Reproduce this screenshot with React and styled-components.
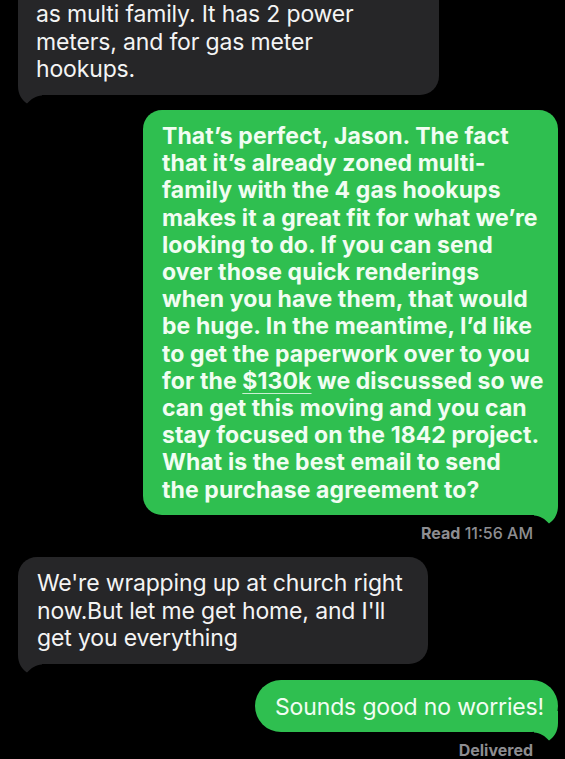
import React from 'react'
import styled, { createGlobalStyle } from 'styled-components'

const GlobalStyle = createGlobalStyle`
    html, body {
        margin: 0;
        padding: 0;
        background: #000;
    }
    body {
        font-family: "Inter", "Liberation Sans", sans-serif;
        overflow: hidden;
    }
`

const thread = [
    {
        from: 'them',
        width: 421,
        cut: true,
        lines: [
            'as multi family. It has 2 power',
            'meters, and for gas meter',
            'hookups.',
        ],
    },
    {
        from: 'me',
        width: 415,
        bold: true,
        lines: [
            'That\u2019s perfect, Jason. The fact',
            'that it\u2019s already zoned multi-',
            'family with the 4 gas hookups',
            'makes it a great fit for what we\u2019re',
            'looking to do. If you can send',
            'over those quick renderings',
            'when you have them, that would',
            'be huge. In the meantime, I\u2019d like',
            'to get the paperwork over to you',
            ['for the ', { link: '$130k' }, ' we discussed so we'],
            'can get this moving and you can',
            'stay focused on the 1842 project.',
            'What is the best email to send',
            'the purchase agreement to?',
        ],
        status: { label: 'Read', time: '11:56 AM' },
    },
    {
        from: 'them',
        width: 410,
        lines: [
            "We're wrapping up at church right",
            "now.But let me get home, and I'll",
            'get you everything',
        ],
    },
    {
        from: 'me',
        width: 303,
        pill: true,
        lines: ['Sounds good no worries!'],
        status: { label: 'Delivered' },
    },
]

const Line = ({ line }) => {
    if (typeof line === 'string') return <TextLine>{line}</TextLine>
    return (
        <TextLine>
            {line.map((part, i) =>
                typeof part === 'string' ? part : <Money key={i}>{part.link}</Money>
            )}
        </TextLine>
    )
}

// bubble tail, drawn for the sent side and mirrored for received
const Tail = ({ side }) => (
    <TailSvg $side={side} width="24" height="30" viewBox="0 0 24 30">
        <path d="M24 0 V12 C24 21 19.5 26.5 15 29.5 C11 25 6 22 0 21.5 V0 Z" />
    </TailSvg>
)

export default function App() {
    return (
        <>
            <GlobalStyle />
            <Thread>
                {thread.map((msg, i) => (
                    <Message key={i} $from={msg.from}>
                        <Bubble
                            $from={msg.from}
                            $width={msg.width}
                            $bold={msg.bold}
                            $cut={msg.cut}
                            $pill={msg.pill}
                        >
                            {msg.lines.map((line, j) => (
                                <Line key={j} line={line} />
                            ))}
                            <Tail side={msg.from} />
                        </Bubble>
                        {msg.status && (
                            <Status>
                                <b>{msg.status.label}</b>
                                {msg.status.time && <span> {msg.status.time}</span>}
                            </Status>
                        )}
                    </Message>
                ))}
            </Thread>
        </>
    )
}

const Thread = styled.main`
    display: flex;
    flex-direction: column;
    padding: 0 7px 0 18px;
    height: 759px;
`

const Message = styled.section`
    display: flex;
    flex-direction: column;
    align-items: ${(p) => (p.$from === 'me' ? 'flex-end' : 'flex-start')};

    & + & {
        margin-top: ${(p) => (p.$from === 'me' ? '15px' : '9px')};
    }
    &:last-child {
        margin-top: 16px;
    }
`

const Bubble = styled.div`
    position: relative;
    box-sizing: border-box;
    width: ${(p) => p.$width}px;
    margin-top: ${(p) => (p.$cut ? '-20px' : '0')};
    padding: ${(p) => (p.$cut ? '21px 18px 11.5px' : p.$pill ? '13.5px 18px 11px 20px' : '13px 18px 11.5px 19px')};
    border-radius: ${(p) => (p.$pill ? '26px' : '19px')};
    background: ${(p) => (p.$from === 'me' ? '#2fbf50' : '#262628')};
    color: ${(p) => (p.$from === 'me' ? '#f1fdf2' : '#f4f4f4')};
    fill: ${(p) => (p.$from === 'me' ? '#2fbf50' : '#262628')};
    font-size: 23px;
    font-weight: ${(p) => (p.$bold ? 700 : 400)};
    line-height: ${(p) => (p.$bold ? '27.2px' : '27.5px')};
    letter-spacing: ${(p) => (p.$bold ? '0.1px' : '-0.15px')};
`

const TextLine = styled.span`
    display: block;
    width: fit-content;
    white-space: nowrap;
    position: relative;
    z-index: 1;
`

const Money = styled.span`
    text-decoration: underline;
    text-decoration-thickness: 1px;
    text-underline-offset: 4px;
    text-decoration-color: rgba(255, 255, 255, 0.75);
`

const TailSvg = styled.svg`
    position: absolute;
    bottom: -9px;
    ${(p) => (p.$side === 'me' ? 'right: 0;' : 'left: 0; transform: scaleX(-1);')}
`

const Status = styled.div`
    margin-top: 9px;
    margin-right: 25px;
    height: 18px;
    line-height: 18px;
    font-size: 16px;
    color: #8d8d91;

    b {
        font-weight: 700;
    }
    span {
        font-weight: 500;
    }
`
